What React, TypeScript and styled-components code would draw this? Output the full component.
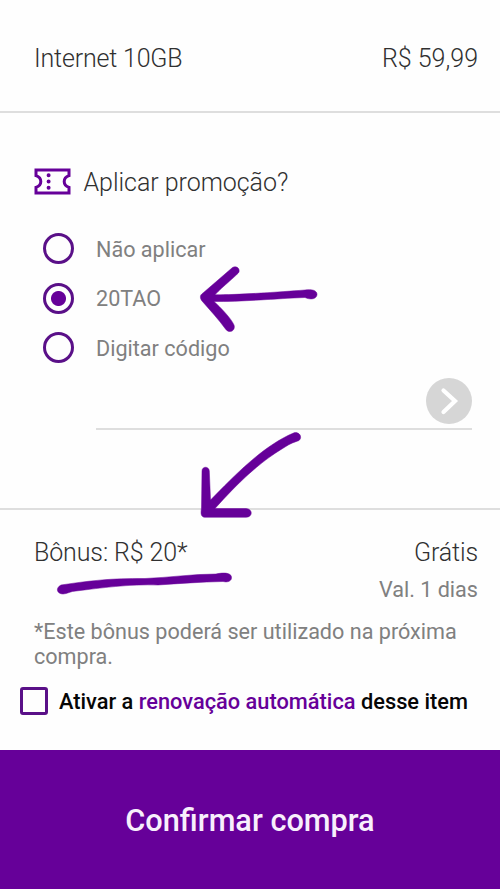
import React, { useState } from "react";
import styled, { createGlobalStyle } from "styled-components";

const purple = "#660099";

const GlobalStyle = createGlobalStyle`
  * { box-sizing: border-box; }
  body { margin: 0; background: #fefefe; }
`;

const Screen = styled.main`
  position: relative;
  width: 500px;
  height: 889px;
  display: flex;
  flex-direction: column;
  overflow: hidden;
  background: #fefefe;
  font-family: Roboto, "Liberation Sans", sans-serif;
`;

const PlanRow = styled.header`
  display: flex;
  justify-content: space-between;
  height: 113px;
  padding: 43px 22px 0 34px;
  border-bottom: 2px solid #dedede;
`;

const Title = styled.span<{ $spacing?: number }>`
  color: #303030;
  font-size: 25px;
  font-weight: 300;
  line-height: 31px;
  letter-spacing: ${(p) => p.$spacing ?? 0}px;
  white-space: nowrap;
`;

const Muted = styled.span<{ $leading?: number }>`
  color: #808080;
  font-size: 21.6px;
  line-height: ${(p) => p.$leading ?? 26}px;
  white-space: nowrap;
`;

const Promotion = styled.section`
  height: 397px;
  padding: 53px 28px 0 34px;
  border-bottom: 2px solid #dedede;
`;

const PromotionHeading = styled.div`
  display: flex;
  align-items: center;
  gap: 12.5px;
  height: 31px;

  ${Title} { padding-top: 2px; }
`;

const Options = styled.div`
  display: grid;
  grid-auto-rows: 49.5px;
  margin: 27px 0 0 9px;
`;

const Option = styled.label`
  display: flex;
  align-items: center;
  gap: 22px;
  cursor: pointer;

  ${Muted} { padding-top: 2px; }
`;

const Radio = styled.input`
  appearance: none;
  flex: none;
  width: 31px;
  height: 31px;
  margin: 0;
  border: 3px solid #5a1088;
  border-radius: 50%;
  &:checked {
    background: radial-gradient(circle, ${purple} 7px, transparent 8px);
  }
`;

const CodeField = styled.div`
  display: flex;
  align-items: flex-start;
  height: 52px;
  margin: 5px 0 0 62px;
  border-bottom: 2px solid #dedede;
`;

const CodeInput = styled.input`
  flex: 1;
  min-width: 0;
  height: 46px;
  border: 0;
  outline: 0;
  background: transparent;
  font: 22px Roboto, sans-serif;
`;

const ApplyButton = styled.button`
  display: block;
  width: 46px;
  height: 46px;
  padding: 0;
  border: 0;
  border-radius: 50%;
  background: #d6d6d6;
`;

const Bonus = styled.section`
  flex: 1;
  padding: 27px 22px 0 34px;
`;

const BonusRow = styled.div`
  display: flex;
  justify-content: space-between;
`;

const Validity = styled.div`
  display: flex;
  justify-content: flex-end;
  margin-top: 9px;
`;

const Note = styled.p`
  margin: 16px 0 0;
  display: flex;
  flex-direction: column;
`;

const Renewal = styled.label`
  display: flex;
  align-items: center;
  gap: 11px;
  height: 28px;
  margin: 18px 0 0 -14px;
  cursor: pointer;
`;

const Checkbox = styled.input`
  appearance: none;
  flex: none;
  width: 28px;
  height: 28px;
  margin: 0;
  border: 3px solid #5a1088;
  border-radius: 3px;
  &:checked { background: ${purple}; }
`;

const RenewalText = styled.span`
  padding-top: 2px;
  color: #060606;
  font-size: 21.8px;
  font-weight: 500;
  line-height: 28px;
  white-space: nowrap;
`;

const Accent = styled.span`
  color: ${purple};
`;

const Confirm = styled.button`
  height: 139px;
  padding: 3px 0 0;
  border: 0;
  background: ${purple};
  color: #f8effc;
  font-family: inherit;
  font-size: 30.7px;
  font-weight: 500;
  line-height: 36px;
`;

const Strokes = styled.svg`
  position: absolute;
  inset: 0;
  pointer-events: none;
`;

const TicketIcon = () => (
  <svg width="37" height="27" viewBox="0 0 37 27" fill="none">
    <path
      d="M2 2H35V7.6C31.6 8.8 30.2 10.9 30.2 13.5S31.6 18.2 35 19.4V25H2V19.4C5.4 18.2 6.8 16.1 6.8 13.5S5.4 8.8 2 7.6Z"
      stroke={purple}
      strokeWidth="3"
    />
    <path d="M14.6 7.2V7.3M14.6 13.5V13.6M14.6 19.7V19.8" stroke={purple} strokeWidth="4" strokeLinecap="round" />
  </svg>
);

const choices = ["Não aplicar", "20TAO", "Digitar código"];

export default function App() {
  const [choice, setChoice] = useState("20TAO");
  return (
    <>
      <GlobalStyle />
      <Screen>
        <PlanRow>
          <Title $spacing={-0.18}>Internet 10GB</Title>
          <Title>R$ 59,99</Title>
        </PlanRow>
        <Promotion>
          <PromotionHeading>
            <TicketIcon />
            <Title $spacing={-0.04}>Aplicar promoção?</Title>
          </PromotionHeading>
          <Options>
            {choices.map((name) => (
              <Option key={name}>
                <Radio type="radio" name="promo" checked={choice === name} onChange={() => setChoice(name)} />
                <Muted>{name}</Muted>
              </Option>
            ))}
          </Options>
          <CodeField>
            <CodeInput aria-label="Código" />
            <ApplyButton aria-label="Aplicar código">
              <svg width="46" height="46" viewBox="0 0 46 46" fill="none">
                <path d="M17.5 12.5L29 23L17.5 34" stroke="#fff" strokeWidth="4.2" strokeLinecap="round" />
              </svg>
            </ApplyButton>
          </CodeField>
        </Promotion>
        <Bonus>
          <BonusRow>
            <Title $spacing={-0.12}>Bônus: R$ 20*</Title>
            <Title $spacing={-0.12}>Grátis</Title>
          </BonusRow>
          <Validity>
            <Muted>Val. 1 dias</Muted>
          </Validity>
          <Note>
            <Muted $leading={25}>*Este bônus poderá ser utilizado na próxima</Muted>
            <Muted $leading={25}>compra.</Muted>
          </Note>
          <Renewal>
            <Checkbox type="checkbox" />
            <RenewalText>
              Ativar a <Accent>renovação automática</Accent> desse item
            </RenewalText>
          </Renewal>
        </Bonus>
        <Confirm>Confirmar compra</Confirm>
        <Strokes width="500" height="889" viewBox="0 0 500 889" fill={purple} stroke={purple} strokeWidth="0.5">
          <path d="M232.5 267.5C236 265.5 240 268 239 272C238.5 274 222 287 215 294.8C235 295 280 292 305 290C311 289 317.5 290 317 295C316 300 309 299.5 305 297.5C278 298.5 238 302 214 301.5C220 307 231 318 234 325C236 331 229 334 225.5 329C219 320 210 310 202 301C199.5 297.5 200 295 203 293Z" />
          <path d="M293.5 433C299 431 303 437 299 440.5C295 442 290 443.5 285 447C258 463 237 484 215 508.5H246C253 509 253 517 246 517.3H205C200 517 201 512 201.5 508L202 471C202 466 209 466 209.3 471L210.5 500C235 475 263 446 293.5 433Z" />
          <path d="M61 585C88 581 111 578 145 578.5C169 577.5 193 574 216 574C221 573 228 572 231 575.5C233 580 229 583 223 581.5C201 582 179 583.5 158 585C129 584 101 588 76 591C71 591 67 594 63 594C57 594 55 588 61 585Z" />
        </Strokes>
      </Screen>
    </>
  );
}
